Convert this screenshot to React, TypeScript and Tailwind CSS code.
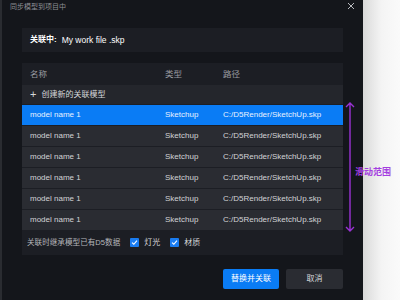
import React from "react";

const rows = Array.from({ length: 6 }, () => ({
  name: "model name 1",
  type: "Sketchup",
  path: "C:/D5Render/SketchUp.skp",
}));

const Check = () => (
  <span className="flex h-[9px] w-[9px] items-center justify-center rounded-[1px] bg-[#1a7cf0]">
    <svg width="7" height="7" viewBox="0 0 8 8" fill="none">
      <path d="M1.2 4.2 3.2 6 6.8 1.8" stroke="white" strokeWidth="1.3" />
    </svg>
  </span>
);

const App = () => {
  return (
    <div
      className="relative grid h-[300px] w-[400px] grid-cols-[2px_361px_37px]"
      style={{ fontFamily: '"Liberation Sans", "Noto Sans CJK SC", sans-serif' }}
    >
      <div className="bg-[#2a2c31]" />
      <div className="relative bg-[#14161b]">
        <div className="h-[28px] pl-[8px] pt-px text-[7px] leading-[12px] text-[#8d8f95]">
          同步模型到项目中
        </div>
        <svg
          className="absolute right-[8px] top-[2px]"
          width="8"
          height="8"
          viewBox="0 0 8 8"
        >
          <path d="M1 1 7 7M7 1 1 7" stroke="#b9bbc0" strokeWidth="1" />
        </svg>

        <div className="px-5">
          <div className="flex h-[24px] items-center gap-[5px] bg-[#1c1e24] px-2 text-[8px] text-white">
            <span className="font-bold">关联中:</span>
            <span className="text-[8.5px]">My work file .skp</span>
          </div>

          <div className="mt-[11px] bg-[#1c1e24]">
            <div className="grid h-[22px] grid-cols-[135px_58px_1fr] items-center px-2 text-[8.5px] text-[#9a9ca2]">
              <span>名称</span>
              <span>类型</span>
              <span>路径</span>
            </div>
            <div className="flex h-[19px] items-center gap-[5px] bg-[#24262c] px-2 text-[8px] text-[#d6d7da]">
              <span className="text-[11px] leading-none">+</span>
              <span>创建新的关联模型</span>
            </div>
            <div className="mt-px flex flex-col gap-px">
              {rows.map((r, i) => (
                <div
                  key={i}
                  className={
                    i === 0
                      ? "grid h-[20px] grid-cols-[135px_58px_1fr] items-center bg-[#0a7cf5] px-2 text-[8px] text-[#e8f1ff]"
                      : "grid h-[20px] grid-cols-[135px_58px_1fr] items-center bg-[#2a2c32] px-2 text-[8px] text-[#d2d3d6]"
                  }
                >
                  <span>{r.name}</span>
                  <span>{r.type}</span>
                  <span>{r.path}</span>
                </div>
              ))}
            </div>
            <div className="flex h-[25px] items-center px-[5px] text-[7.6px] text-[#b4b6bb]">
              <span>关联时继承模型已有D5数据</span>
              <span className="ml-[10px]">
                <Check />
              </span>
              <span className="ml-[5px] text-[8px] text-[#d6d7da]">灯光</span>
              <span className="ml-[10px]">
                <Check />
              </span>
              <span className="ml-[5px] text-[8px] text-[#d6d7da]">材质</span>
            </div>
          </div>

          <div className="mt-[14px] flex justify-end gap-[7px]">
            <button className="flex h-[20px] w-[56px] items-center justify-center rounded-[2px] bg-[#0a7cf5] text-[8px] text-white">
              替换并关联
            </button>
            <button className="flex h-[20px] w-[57px] items-center justify-center rounded-[2px] bg-[#2a2c32] text-[8px] text-[#d6d7da]">
              取消
            </button>
          </div>
        </div>

        {/* scroll range annotation */}
        <svg
          className="absolute left-[342px] top-[101px]"
          width="12"
          height="132"
          viewBox="0 0 12 132"
          fill="none"
        >
          <path
            d="M6 2V130M2 6 6 2 10 6M2 126 6 130 10 126"
            stroke="#9a32d4"
            strokeWidth="1.4"
          />
        </svg>
      </div>
      {/* light backdrop right of the dialog: dark colours inverted by a filter */}
      <div className="bg-linear-to-r from-[#262626] via-[#0b0b0b] to-[#050505] invert" />

      <span className="absolute left-[355px] top-[166px] whitespace-nowrap text-[9px] font-bold text-[#a43ee0]">
        滑动范围
      </span>
    </div>
  );
};

export default App;
